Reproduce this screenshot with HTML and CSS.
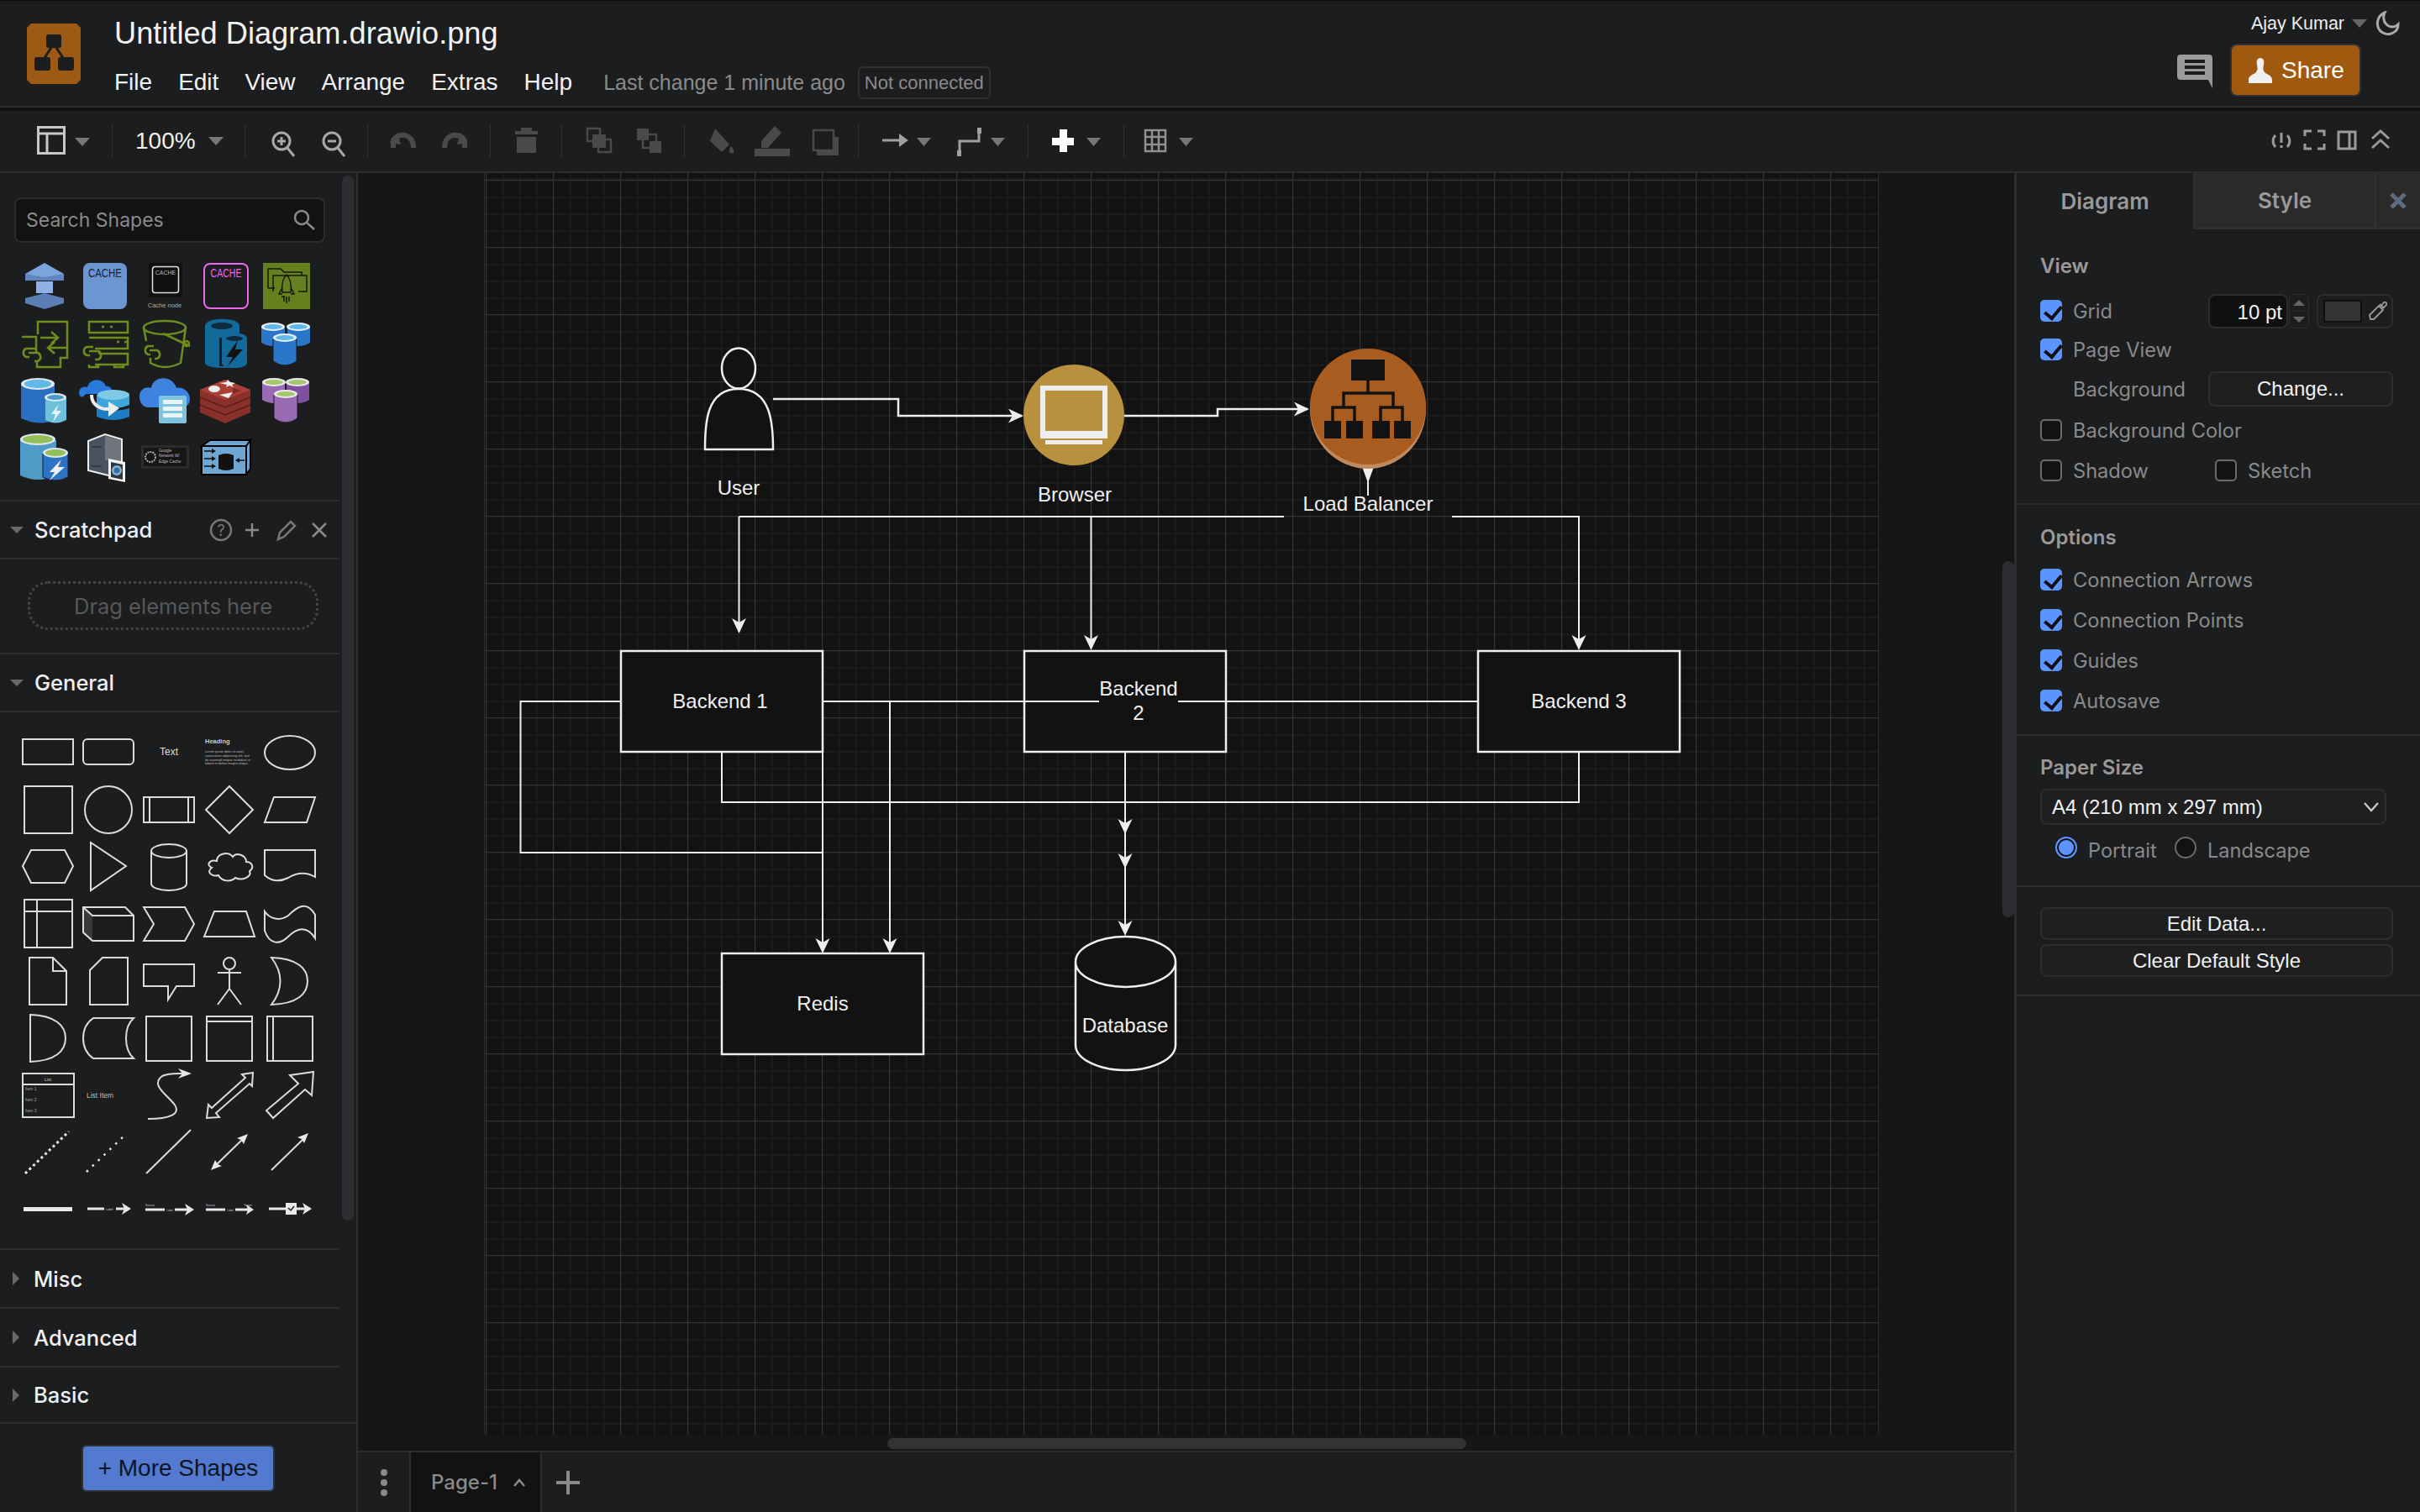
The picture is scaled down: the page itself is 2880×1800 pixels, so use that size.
FILE: index.html
```html
<!DOCTYPE html>
<html lang="en">
<head>
<meta charset="utf-8">
<title>Untitled Diagram.drawio.png</title>
<link rel="stylesheet" href="styles.css">
</head>
<body>
<header class="header">
  <svg class="logo" width="64" height="72" viewBox="0 0 64 72"><path class="logo-bg" d="M5 0H59L64 5V67L59 72H5L0 67V5Z"/><path class="logo-link" d="M32 24L19 44M32 24L45 44"/><rect class="logo-node" x="23" y="13" width="18" height="16" rx="3"/><rect class="logo-node" x="9" y="40" width="19" height="16" rx="3"/><rect class="logo-node" x="37" y="40" width="19" height="16" rx="3"/></svg>
  <div class="titleblock">
    <div class="title">Untitled Diagram.drawio.png</div>
    <nav class="menu">
      <span>File</span><span>Edit</span><span>View</span><span>Arrange</span><span>Extras</span><span>Help</span>
      <span class="lastchange">Last change 1 minute ago</span>
      <span class="status">Not connected</span>
    </nav>
  </div>
  <div class="account">
    <div class="userrow">
      <span class="username">Ajay Kumar</span>
      <svg width="18" height="10" viewBox="0 0 18 10"><path class="caret-dim" d="M0 0H18L9 10Z"/></svg>
      <svg width="30" height="30" viewBox="0 0 30 30"><path class="moon" d="M12 2C5 5 2 12 4 19C6 26 15 30 22 26C26 24 28 20 28 16C24 20 18 20 14 16C10 12 10 6 12 2Z"/></svg>
    </div>
    <div class="sharerow">
      <svg width="42" height="40" viewBox="0 0 42 40"><path class="comment" d="M4 0H38Q42 0 42 4V40L37 30H4Q0 30 0 26V4Q0 0 4 0Z"/><rect class="comment-line" x="9" y="6" width="24" height="4"/><rect class="comment-line" x="9" y="13" width="24" height="4"/><rect class="comment-line" x="9" y="20" width="24" height="4"/></svg>
      <button class="share"><svg width="30" height="30" viewBox="0 0 30 30"><path class="share-icon" d="M15 0C19 0 20 4 19 8C18 12 18 15 21 18C25 20 29 22 29 26V30H1V26C1 22 5 20 9 18C12 15 12 12 11 8C10 4 11 0 15 0Z"/></svg>Share</button>
    </div>
  </div>
</header>
<div class="toolbar">
  <svg width="133" height="72" viewBox="0 132 133 72"><rect class="ti" x="45.500" y="151.500" width="31" height="31"/><path class="ti" d="M46 159H76M56 159V182"/><path class="caret" d="M89 164H107L98 174Z"/></svg>
  <i class="sep"></i>
  <div class="zoomval"><span>100%</span><svg width="18" height="10" viewBox="0 0 18 10"><path class="caret" d="M0 0H18L9 10Z"/></svg></div>
  <i class="sep"></i>
  <svg width="145" height="72" viewBox="292 132 145 72"><circle class="ti2" cx="335" cy="168" r="10"/><path class="ti2" d="M342 176L350 186M330 168H340M335 163V173"/><circle class="ti2" cx="395" cy="168" r="10"/><path class="ti2" d="M402 176L410 186M390 168H400"/></svg>
  <i class="sep"></i>
  <svg width="145" height="72" viewBox="438 132 145 72"><path class="off-s" d="M468 176V167Q472 160 482 161Q492 164 492 176"/><path class="off" d="M464 170L473 158L477 172Z"/><path class="off-s" d="M553 176V167Q549 160 539 161Q529 164 529 176"/><path class="off" d="M557 170L548 158L544 172Z"/></svg>
  <i class="sep"></i>
  <svg width="84" height="72" viewBox="584 132 84 72"><path class="off" d="M620 152H633V156H640V160H613V156H620ZM615 163H638V182H615Z"/></svg>
  <i class="sep"></i>
  <svg width="145" height="72" viewBox="669 132 145 72"><rect class="off-t" x="699" y="153" width="15" height="15"/><rect class="off-t" x="712" y="166" width="15" height="15"/><rect class="off" x="705" y="160" width="16" height="16"/><rect class="off" x="758" y="153" width="14" height="14"/><rect class="off" x="773" y="168" width="14" height="14"/><rect class="off-t" x="765" y="160" width="16" height="16"/></svg>
  <i class="sep"></i>
  <svg width="206" height="72" viewBox="815 132 206 72"><path class="off" d="M851 153L868 172L859 181L845 168ZM870 174Q875 180 873 182Q870 184 868 181Q867 178 870 174Z"/><path class="off" d="M922 150L930 158L914 176H906V168ZM898 177H940V186H898Z"/><rect class="off-t" x="968" y="155" width="24" height="24"/><path class="off" d="M992 163H998V185H972V179H992Z"/></svg>
  <i class="sep"></i>
  <svg width="201" height="72" viewBox="1022 132 201 72"><path class="ti3" d="M1050 167H1072"/><path class="tf" d="M1081 167L1070 159V175Z"/><path class="caret" d="M1091 164H1108L1099.500 174Z"/><path class="ti3" d="M1142 181V168H1165V157"/><rect class="ti4" x="1139" y="179" width="5" height="7"/><rect class="ti4" x="1163" y="152" width="5" height="7"/><path class="caret" d="M1179 164H1196L1187.500 174Z"/></svg>
  <i class="sep"></i>
  <svg width="113" height="72" viewBox="1224 132 113 72"><path class="plus" d="M1261 154H1270V164H1278V173H1270V181H1261V173H1252V164H1261Z"/><path class="caret" d="M1293 164H1310L1301.500 174Z"/></svg>
  <i class="sep"></i>
  <svg width="92" height="72" viewBox="1338 132 92 72"><path class="ti5" d="M1363 155H1387V180H1363ZM1363 163H1387M1363 172H1387M1371 155V180M1379 155V180"/><path class="caret" d="M1403 164H1420L1411.500 174Z"/></svg>
  <svg class="tb-right" width="160" height="72" viewBox="2700 132 160 72"><path class="ts" d="M2708 161A10 10 0 0 0 2708 175M2722 161A10 10 0 0 1 2722 175M2715 158V170M2715 173V176"/><path class="ts" d="M2751 156H2743V162M2758 156H2766V162M2743 171V177H2751M2766 171V177H2758"/><path class="ts" d="M2783 157H2803V177H2783ZM2796 157V177"/><path class="ts" d="M2823 165L2833 156L2843 165M2823 176L2833 167L2843 176"/></svg>
</div>
<main class="main">
  <aside class="sidebar">
    <div class="sidebar-thumb"></div>
    <div class="search-sec">
      <div class="search"><span>Search Shapes</span><svg width="26" height="26" viewBox="0 0 26 26"><circle class="gi" cx="10" cy="10" r="8"/><path class="gi" d="M16 16L25 24"/></svg></div>
      <div class="icons">
        <svg viewBox="0 0 72 68"><path fill="#7ba4dd" d="M36 7L59 20V28H13V20Z"/><path fill="#5f86bf" d="M13 20L36 24L59 20V28H13Z"/><rect fill="#8fb3e6" x="26" y="29" width="20" height="14"/><path fill="#5b7fb5" d="M13 49L36 43L59 49V55L36 62L13 55Z"/></svg>
        <svg viewBox="0 0 72 68"><rect fill="#6c96d2" x="10" y="7" width="52" height="55" rx="8"/><text class="ic-t ic-dark" x="36" y="24" textLength="40" lengthAdjust="spacingAndGlyphs">CACHE</text></svg>
        <svg viewBox="0 0 72 68"><rect fill="#101010" x="16" y="7" width="40" height="41"/><rect class="ic-w" x="20.500" y="11.500" width="31" height="31" rx="3"/><text class="ic-s" x="36" y="21">CACHE</text><text class="ic-n" x="35" y="60">Cache node</text></svg>
        <svg viewBox="0 0 72 68"><rect class="ic-p" x="10" y="8" width="52" height="53" rx="7"/><text class="ic-t ic-pink" x="36" y="24" textLength="37" lengthAdjust="spacingAndGlyphs">CACHE</text></svg>
        <svg viewBox="0 0 72 68"><rect fill="#67801f" x="8" y="7" width="56" height="55"/><path class="ic-k" d="M14 37V14H29L33 18H54V22H60V41H50M14 37H22M20 41V22H54M34 47H30"/><path class="ic-k" d="M36 21C41 26 42 34 41 42H31C30 34 31 26 36 21ZM31 36L27 44H31M41 36L45 44H41M33 47V53M36 47V55M39 47V53"/></svg>

        <svg viewBox="0 0 72 68"><path class="ic-g" d="M28 24V9H63V52H55V63H27V55M9 27H26V47"/><path class="ic-g" d="M31 28H50M44 21L52 28L44 35M62 40H41M48 33L40 40L48 47"/><path class="ic-g" d="M25 41H14A5.500 5.500 0 0 0 14 51H18M17 46H28A5.500 5.500 0 0 1 28 56H24"/></svg>
        <svg viewBox="0 0 72 68"><path class="ic-g" d="M17 9H63V22H17ZM17 28H63V41H24M28 47H63V60H24M32 15H35M42 15H45M50 33H53M59 33H62M17 60V63H28V60M47 60V63H58V60"/><path class="ic-g" d="M22 39H14A5.500 5.500 0 0 0 14 49H18M17 44H28A5.500 5.500 0 0 1 28 54H24"/></svg>
        <svg viewBox="0 0 72 68"><ellipse class="ic-g" cx="35" cy="16" rx="25" ry="8"/><path class="ic-g" d="M10 16L13 32M60 16L54 58Q35 68 18 58V52M33 23L48 30L65 38"/><circle class="ic-g" cx="61" cy="35" r="3"/><path class="ic-g" d="M22 38H15A5.500 5.500 0 0 0 15 48H18M17 43H26A5.500 5.500 0 0 1 26 53H23"/></svg>
        <svg viewBox="0 0 72 68"><path fill="#13699a" d="M11 14V58C11 66 52 66 52 58V14C52 3 11 3 11 14Z"/><ellipse fill="#0e2b3d" cx="31" cy="14" rx="13" ry="4"/><path fill="#1c1d1f" d="M28 28H64V62H28Z"/><path fill="#13699a" d="M31 29V58C31 66 61 66 61 58V29C61 20 31 20 31 29Z"/><ellipse fill="#0e2b3d" cx="46" cy="29" rx="10" ry="3"/><path fill="#111" d="M50 31L36 51H44L38 62L56 42H47Z"/></svg>
        <svg viewBox="0 0 72 68"><path fill="#2a77c9" d="M6 16V34Q20 42 34 34V16Z"/><ellipse fill="#e8eef5" cx="20" cy="15" rx="14" ry="5"/><ellipse fill="#5fb8e6" cx="20" cy="15" rx="11" ry="3"/><path fill="#2a77c9" d="M37 16V34Q51 42 64 34V16Z"/><ellipse fill="#e8eef5" cx="50" cy="15" rx="14" ry="5"/><ellipse fill="#5fb8e6" cx="50" cy="15" rx="11" ry="3"/><path fill="#2a77c9" stroke="#1c1d1f" d="M20 30V56Q34 66 48 56V30Z"/><ellipse fill="#e8eef5" cx="34" cy="28" rx="14" ry="5"/><ellipse fill="#5fb8e6" cx="34" cy="28" rx="11" ry="3"/></svg>

        <svg viewBox="0 0 72 68"><path fill="#2a6fc0" d="M8 16V56Q30 66 48 58V16Z"/><ellipse fill="#dfe8ef" cx="28" cy="15" rx="20" ry="7"/><ellipse fill="#5fb8e6" cx="28" cy="15" rx="16" ry="5"/><path fill="#6fc0dc" d="M37 32V58Q49 65 62 58V32Z"/><ellipse fill="#dfe8ef" cx="49" cy="31" rx="13" ry="5"/><ellipse fill="#4a9cc8" cx="49" cy="31" rx="10" ry="3"/><path fill="#e4f2f8" d="M53 39L44 51H49L46 60L56 47H50Z"/></svg>
        <svg viewBox="0 0 72 68"><path fill="#2a7ade" d="M5 26C5 18 13 18 15 19C18 7 34 8 37 18C42 17 46 22 44 27H13C9 33 5 30 5 26Z"/><path fill="#3fa6dc" d="M26 28H65V40Q46 48 26 40Z"/><path fill="#1c7cc4" d="M26 44Q46 50 65 44V54Q46 62 26 54Z"/><ellipse fill="#7ecbe8" cx="46" cy="28" rx="19" ry="6"/><path fill="none" stroke="#eee" stroke-width="4" d="M20 28C20 40 30 46 42 45"/><path fill="#eee" d="M53 44L40 36V54Z"/></svg>
        <svg viewBox="0 0 72 68"><path fill="#3e83e0" d="M5 30C5 20 15 18 19 20C21 5 44 4 49 20C56 18 65 24 65 33C65 40 60 43 54 43H16C9 43 5 37 5 30Z"/><rect fill="#7fc4de" x="28" y="29" width="33" height="33" rx="2"/><rect fill="#e8f4f8" x="33" y="34" width="23" height="5"/><rect fill="#e8f4f8" x="33" y="42" width="23" height="5"/><rect fill="#e8f4f8" x="33" y="50" width="23" height="5"/></svg>
        <svg viewBox="0 0 72 68"><path fill="#8a302a" d="M5 22L35 10L65 22V49L35 62L5 49Z"/><path fill="none" stroke="#5a1d19" stroke-width="1.500" d="M5 31L35 43L65 31M5 40L35 52L65 40"/><path fill="#a93f37" d="M5 22L35 10L65 22L35 34Z"/><ellipse fill="#eee" cx="22" cy="21" rx="7" ry="4"/><path fill="#eee" d="M28 14L36 13L38 10L41 13L47 14L43 16L45 19L40 17L36 19L37 16Z"/><path fill="#eee" d="M28 28L44 25L39 32Z"/><path fill="#7c2a24" d="M44 20L54 23L44 27Z"/></svg>
        <svg viewBox="0 0 72 68"><path fill="#9a6bb5" d="M7 14V34Q21 42 34 34V14Z"/><ellipse fill="#ece6f0" cx="21" cy="13" rx="14" ry="5"/><ellipse fill="#a4c86a" cx="21" cy="13" rx="11" ry="3"/><path fill="#7f4fa0" d="M36 14V34Q50 42 63 34V14Z"/><ellipse fill="#ece6f0" cx="49" cy="13" rx="14" ry="5"/><ellipse fill="#a4c86a" cx="49" cy="13" rx="11" ry="3"/><path fill="#9a6bb5" stroke="#1c1d1f" d="M21 28V56Q35 66 49 56V28Z"/><ellipse fill="#ece6f0" cx="35" cy="27" rx="14" ry="5"/><ellipse fill="#a4c86a" cx="35" cy="27" rx="11" ry="3"/></svg>

        <svg viewBox="0 0 72 68"><path fill="#4f9bc8" d="M7 14V56Q28 66 50 56V14Z"/><ellipse fill="#dfe8ef" cx="28" cy="13" rx="21" ry="7"/><ellipse fill="#93bf5a" cx="28" cy="13" rx="18" ry="5"/><path fill="#2d73c4" stroke="#1c1d1f" d="M34 30V58Q49 66 64 58V30Z"/><ellipse fill="#dfe8ef" cx="49" cy="29" rx="15" ry="6"/><ellipse fill="#93bf5a" cx="49" cy="29" rx="12" ry="4"/><path fill="#eef" d="M56 37L42 52H48L42 62L60 46H52Z"/></svg>
        <svg viewBox="0 0 72 68"><path fill="#4a5260" stroke="#eee" stroke-width="2" d="M16 15L36 7L56 13V55L40 56L16 50Z"/><path fill="#71767d" d="M36 9L55 14V40L36 38Z"/><path stroke="#222" d="M20 22H32M20 45H32"/><path fill="#f4f4f4" d="M40 36L60 40V64L40 60Z"/><path fill="#30363e" d="M43 40L57 43V61L43 58Z"/><circle fill="#8fb0c8" cx="50" cy="50" r="6"/><circle fill="#2d6fa8" cx="50" cy="50" r="3.500"/></svg>
        <svg viewBox="0 0 72 68"><rect fill="#2b2c2e" x="7" y="20" width="57" height="28" rx="2"/><rect fill="#161616" x="10" y="23" width="51" height="22"/><circle class="ic-ring" cx="18" cy="34" r="6"/><text class="ic-g-t" x="28" y="28">Google</text><text class="ic-g-t" x="28" y="34">Network W/</text><text class="ic-g-t" x="28" y="41">Edge Cache</text></svg>
        <svg viewBox="0 0 72 68"><path fill="#6fa7d4" stroke="#000" stroke-width="2" d="M7 21H60V55H7Z"/><path fill="#6fa7d4" stroke="#000" stroke-width="2" d="M7 21L17 14H65L60 21ZM60 21L65 14V48L60 55Z"/><path fill="#111" d="M27 32Q36 28 45 32V48Q36 52 27 48Z"/><path class="ic-a" d="M10 27H22M10 36H22M10 45H22M48 38H58"/><path fill="#111" d="M24 27L19 24V30ZM24 36L19 33V39ZM24 45L19 42V48ZM47 38L52 35V41Z"/></svg>
      </div>
    </div>
    <div class="sec-head"><i class="tri-down"></i><span>Scratchpad</span>
      <svg class="scratch-tools" width="148" height="30" viewBox="0 0 148 30"><circle class="gi2" cx="22" cy="15" r="12"/><text class="help" x="22" y="22">?</text><path class="gi" d="M51 15H67M59 7V23"/><path class="gi2" d="M90 26L92 18L105 5L110 10L97 23Z"/><path class="gi" d="M132 7L148 23M148 7L132 23" transform="translate(-1 0)"/></svg>
    </div>
    <div class="scratch"><div class="drop">Drag elements here</div></div>
    <div class="sec-head"><i class="tri-down"></i><span>General</span></div>
    <div class="general">
      <svg viewBox="0 0 72 68"><rect class="s" x="6" y="19" width="60" height="30"/></svg>
      <svg viewBox="0 0 72 68"><rect class="s" x="6" y="19" width="60" height="30" rx="5"/></svg>
      <svg viewBox="0 0 72 68"><text class="sh-text" x="36" y="38">Text</text></svg>
      <svg viewBox="0 0 72 68"><text class="sh-head" x="7" y="24">Heading</text><text class="sh-lorem" x="7" y="35">Lorem ipsum dolor sit amet,</text><text class="sh-lorem" x="7" y="40">consectetur adipisicing elit, sed</text><text class="sh-lorem" x="7" y="45">do eiusmod tempor incididunt ut</text><text class="sh-lorem" x="7" y="49">labore et dolore magna aliqua.</text></svg>
      <svg viewBox="0 0 72 68"><ellipse class="s" cx="36" cy="35" rx="30" ry="20"/></svg>

      <svg viewBox="0 0 72 68"><rect class="s" x="8" y="7" width="57" height="56"/></svg>
      <svg viewBox="0 0 72 68"><ellipse class="s" cx="36" cy="35" rx="28" ry="28"/></svg>
      <svg viewBox="0 0 72 68"><path class="s" d="M6 20H66V50H6ZM13 20V50M59 20V50"/></svg>
      <svg viewBox="0 0 72 68"><path class="s" d="M36 7L64 35L36 63L8 35Z"/></svg>
      <svg viewBox="0 0 72 68"><path class="s" d="M6 50L17 20H66L56 50Z"/></svg>

      <svg viewBox="0 0 72 68"><path class="s" d="M6 34L16 15H56L66 34L56 54H16Z"/></svg>
      <svg viewBox="0 0 72 68"><path class="s" d="M15 6L57 34L15 63Z"/></svg>
      <svg viewBox="0 0 72 68"><path class="s" d="M15 16V55A21 8 0 0 0 57 55V16A21 8 0 0 0 15 16A21 8 0 0 0 57 16"/></svg>
      <svg viewBox="0 0 72 68"><path class="s" d="M21 28C12 26 8 33 15 36C8 41 15 47 23 45C27 53 38 53 43 48C51 52 63 47 60 40C66 36 63 29 56 29C56 21 44 17 40 23C35 16 21 19 21 28Z"/></svg>
      <svg viewBox="0 0 72 68"><path class="s" d="M6 15H66V47C54 40 44 42 34 48C24 53 14 52 6 45Z"/></svg>

      <svg viewBox="0 0 72 68"><path class="s" d="M8 6H65V63H8ZM8 20H65M23 6V63"/></svg>
      <svg viewBox="0 0 72 68"><path class="sd" d="M6 15L17 25V55L6 45Z"/><path class="s" d="M6 15H56L66 25V55H17L6 45ZM6 15L17 25H66"/></svg>
      <svg viewBox="0 0 72 68"><path class="s" d="M6 15H55L66 35L55 55H6L18 35Z"/></svg>
      <svg viewBox="0 0 72 68"><path class="s" d="M6 50L18 20H56L66 50Z"/></svg>
      <svg viewBox="0 0 72 68"><path class="s" d="M6 20C12 29 24 32 34 25C44 15 56 6 66 24V52C56 36 44 40 34 50C24 60 12 60 6 43Z"/></svg>

      <svg viewBox="0 0 72 68"><path class="s" d="M14 7H42L58 23V63H14ZM42 7V23H58"/></svg>
      <svg viewBox="0 0 72 68"><path class="s" d="M29 7H59V63H14V22Z"/></svg>
      <svg viewBox="0 0 72 68"><path class="s" d="M6 15H66V41H45L35 57V41H6Z"/></svg>
      <svg viewBox="0 0 72 68"><circle class="s" cx="36" cy="14" r="7"/><path class="s" d="M22 25H50M36 21V44L22 63M36 44L50 63"/></svg>
      <svg viewBox="0 0 72 68"><path class="s" d="M14 7C45 8 57 20 57 35C57 50 45 62 14 63C28 45 28 25 14 7Z"/></svg>

      <svg viewBox="0 0 72 68"><path class="s" d="M15 7C45 8 57 20 57 35C57 50 45 62 15 63Z"/></svg>
      <svg viewBox="0 0 72 68"><path class="s" d="M18 11H66C54 22 54 48 66 59H18C2 48 2 22 18 11Z"/></svg>
      <svg viewBox="0 0 72 68"><rect class="s" x="9" y="9" width="54" height="53"/></svg>
      <svg viewBox="0 0 72 68"><path class="s" d="M9 9H63V62H9ZM9 15H63"/></svg>
      <svg viewBox="0 0 72 68"><path class="s" d="M9 9H63V62H9ZM16 9V62"/></svg>

      <svg viewBox="0 0 72 68"><path class="s" d="M6 9H67V61H6ZM6 22H67"/><text class="sh-list" x="36" y="18">List</text><text class="sh-item" x="9" y="29">Item 1</text><text class="sh-item" x="9" y="42">Item 2</text><text class="sh-item" x="9" y="55">Item 3</text></svg>
      <svg viewBox="0 0 72 68"><text class="sh-li" x="10" y="38">List Item</text></svg>
      <svg viewBox="0 0 72 68"><path class="s" d="M11 63C35 63 52 58 42 45C32 33 14 22 28 12C36 8 46 9 55 9"/><path class="sf" d="M63 9L47 3L52 9L47 15Z"/></svg>
      <svg viewBox="0 0 72 68"><path class="s" d="M64 8L51 10L55 14L15 50L11 46L9 62L24 61L20 56L60 21L63 24Z"/></svg>
      <svg viewBox="0 0 72 68"><path class="s" d="M64 7L36 11L46 21L8 53L16 62L54 28L62 35Z"/></svg>

      <svg viewBox="0 0 72 68"><path class="dot" d="M9 60L61 10"/></svg>
      <svg viewBox="0 0 72 68"><path class="dot2" d="M10 58L58 12"/></svg>
      <svg viewBox="0 0 72 68"><path class="s" d="M9 60L62 8"/></svg>
      <svg viewBox="0 0 72 68"><path class="s" d="M17 53L54 17"/><path class="sf" d="M58 13L53 25L50 20L45 18ZM14 56L19 44L22 49L27 51Z"/></svg>
      <svg viewBox="0 0 72 68"><path class="s" d="M14 56L54 17"/><path class="sf" d="M58 12L53 24L50 19L45 17Z"/></svg>

      <svg viewBox="0 0 72 68"><rect class="sf" x="7" y="32" width="58" height="5"/></svg>
      <svg viewBox="0 0 72 68"><path class="s3" d="M11 34H31M45 34H60"/><text class="sh-lab" x="33" y="36">Label</text><path class="sf" d="M63 34L52 27L55 34L52 41Z"/></svg>
      <svg viewBox="0 0 72 68"><path class="s3" d="M8 35H31M43 35H63"/><text class="sh-lab" x="8" y="31">Source</text><text class="sh-lab2" x="37" y="37">Label</text><path class="sf" d="M66 35L55 28L58 35L55 42Z"/></svg>
      <svg viewBox="0 0 72 68"><path class="s3" d="M8 35H31M43 35H62"/><text class="sh-lab" x="8" y="31">Source</text><text class="sh-lab2" x="37" y="37">Label</text><text class="sh-lab" x="53" y="31">Target</text><path class="sf" d="M65 35L56 29L58 35L56 41Z"/></svg>
      <svg viewBox="0 0 72 68"><path class="s3" d="M11 34H60"/><rect class="sf" x="31" y="27" width="13" height="14"/><path class="chk" d="M34 33L37 36L41 31"/><path class="sf" d="M62 34L51 27L54 34L51 41Z"/></svg>
    </div>
    <div class="collapsed"><i class="tri-right"></i><span>Misc</span></div>
    <div class="collapsed"><i class="tri-right"></i><span>Advanced</span></div>
    <div class="collapsed short"><i class="tri-right"></i><span>Basic</span></div>
    <div class="more-wrap"><button class="more">+ More Shapes</button></div>
  </aside>

  <section class="workspace">
    <div class="canvas">
      <div class="page">
        <svg class="diagram" width="1658" height="1502" viewBox="577 206 1658 1502">
          <defs><marker id="head" markerWidth="20" markerHeight="18" refX="16" refY="8.500" orient="auto" markerUnits="userSpaceOnUse"><path class="arrow" d="M0 0L18 8.500L0 17L5 8.500Z"/></marker></defs>
          <g class="box"><ellipse cx="879" cy="438.500" rx="20" ry="24"/><path d="M839 535C839 505 840 463 879 463C918 463 920 505 920 535Z"/></g>
          <text class="lbl" x="879" y="589">User</text>

          <path class="edge thick" marker-end="url(#head)" d="M920 475H1069V495H1216"/>
          <ellipse class="browser" cx="1278" cy="494" rx="60" ry="60"/>
          <path class="mono" d="M1238 459H1318V522H1238ZM1244 465V513H1312V465ZM1244 524H1312V529H1244Z" fill-rule="evenodd"/>
          <text class="lbl" x="1279" y="597">Browser</text>

          <path class="edge thick" marker-end="url(#head)" d="M1338 495H1449V487H1556"/>
          <path class="edge" d="M1628 590V560"/><path class="arrow" d="M1628 575L1620 553L1628 558L1636 553Z"/>
          <ellipse class="lb-shade" cx="1628" cy="487" rx="69" ry="71"/>
          <ellipse class="lb" cx="1628" cy="484" rx="69" ry="69"/>
          <g class="lb-icon"><rect x="1608" y="428" width="40" height="25"/><rect x="1576" y="501" width="20" height="21"/><rect x="1602" y="501" width="20" height="21"/><rect x="1633" y="501" width="21" height="21"/><rect x="1659" y="501" width="20" height="21"/></g>
          <path class="lb-link" d="M1628 453V468M1599 484V468H1658V484M1586 501V485H1612V501M1643 501V485H1669V501"/>

          <text class="lbl" x="1628" y="608">Load Balancer</text>
          <path class="edge" d="M1528 615H879.500"/>
          <path class="edge" marker-end="url(#head)" d="M879.500 615V752"/>
          <path class="edge" marker-end="url(#head)" d="M1298.500 615V772"/>
          <path class="edge" marker-end="url(#head)" d="M1728 615H1879V772"/>

          <path class="edge" d="M739 835H619.500V1015H979"/>
          <path class="edge" d="M979 835H1308M1402 835H1759"/>
          <path class="edge" d="M859 895V955H1879V895"/>
          <path class="edge" marker-end="url(#head)" d="M979 895V1133"/>
          <path class="edge" marker-end="url(#head)" d="M1059 835V1133"/>
          <path class="edge" marker-end="url(#head)" d="M1339 895V955L1339 991"/>
          <path class="edge" marker-end="url(#head)" d="M1339 991V1032"/>
          <path class="edge" marker-end="url(#head)" d="M1339 1032V1112"/>

          <rect class="box" x="739" y="775" width="240" height="120"/><text class="lbl" x="857" y="843">Backend 1</text>
          <path class="box-open" d="M1219 835V775H1459V895H1219V835"/><path class="edge" d="M1219 835H1308M1402 835H1459"/>
          <text class="lbl" x="1355" y="828">Backend</text><text class="lbl" x="1355" y="857">2</text>
          <rect class="box" x="1759" y="775" width="240" height="120"/><text class="lbl" x="1879" y="843">Backend 3</text>
          <rect class="box" x="859" y="1135" width="240" height="120"/><text class="lbl" x="979" y="1203">Redis</text>
          <g class="box"><path d="M1280 1145V1244A59.500 30 0 0 0 1399 1244V1145A59.500 30 0 0 0 1280 1145A59.500 30 0 0 0 1399 1145"/></g>
          <text class="lbl" x="1339" y="1229">Database</text>
        </svg>
      </div>
      <div class="vthumb"></div>
      <div class="hthumb"></div>
    </div>
    <div class="tabbar">
      <div class="tab-more"><svg width="14" height="34" viewBox="0 0 14 34"><circle class="dots" cx="7" cy="5" r="4"/><circle class="dots" cx="7" cy="17" r="4"/><circle class="dots" cx="7" cy="29" r="4"/></svg></div>
      <div class="tab"><span>Page-1</span><svg width="14" height="10" viewBox="0 0 14 10"><path class="chev" d="M1 9L7 2L13 9"/></svg></div>
      <svg class="tab-add" width="28" height="28" viewBox="0 0 28 28"><path class="add" d="M14 0V28M0 14H28"/></svg>
    </div>
  </section>

  <aside class="panel">
    <div class="tabs"><div class="ptab on">Diagram</div><div class="ptab">Style</div><div class="ptab close"><svg width="20" height="20" viewBox="0 0 20 20"><path class="x" d="M2 2L18 18M18 2L2 18"/></svg></div></div>
    <div class="psec view">
      <h3>View</h3>
      <div class="row h46"><i class="cb on"></i><label>Grid</label>
        <div class="ctrls"><div class="num">10 pt</div><div class="spin"><svg width="24" height="41" viewBox="0 0 24 41"><path class="sp" d="M5 14L12 7L19 14ZM5 27L12 34L19 27Z"/><path class="sp-l" d="M1 20H23"/></svg></div>
          <div class="swatch"><i></i><svg width="22" height="24" viewBox="0 0 22 24"><path class="pip" d="M2 22L1 17L12 6L17 11L6 22ZM13 4L18 9M15 6L18 2Q20 1 21 3Q22 5 20 6L17 9"/></svg></div></div></div>
      <div class="row h46"><i class="cb on"></i><label>Page View</label></div>
      <div class="row h48"><i class="cb none"></i><label>Background</label><button class="pbtn change">Change...</button></div>
      <div class="row h50"><i class="cb"></i><label>Background Color</label></div>
      <div class="row h46"><i class="cb"></i><label class="w1">Shadow</label><i class="cb"></i><label>Sketch</label></div>
    </div>
    <div class="psec options">
      <h3>Options</h3>
      <div class="row"><i class="cb on"></i><label>Connection Arrows</label></div>
      <div class="row"><i class="cb on"></i><label>Connection Points</label></div>
      <div class="row"><i class="cb on"></i><label>Guides</label></div>
      <div class="row"><i class="cb on"></i><label>Autosave</label></div>
    </div>
    <div class="psec paper">
      <h3>Paper Size</h3>
      <div class="select"><span>A4 (210 mm x 297 mm)</span><svg width="18" height="12" viewBox="0 0 18 12"><path class="sel-chev" d="M1 1L9 10L17 1"/></svg></div>
      <div class="radios"><i class="radio on"></i><label class="w2">Portrait</label><i class="radio"></i><label>Landscape</label></div>
    </div>
    <div class="psec actions"><button class="pbtn">Edit Data...</button><button class="pbtn">Clear Default Style</button></div>
  </aside>
</main>
</body>
</html>
```

FILE: styles.css
```css
*{box-sizing:border-box}
html,body{margin:0;padding:0;width:2880px;height:1800px;overflow:hidden;background:#1c1d1f;font-family:Inter,"Noto Sans",sans-serif;color:#f0f0f0}
i{font-style:normal;display:block}
button{font-family:inherit}
svg{display:block;flex:none}

.header{height:132px;display:flex;padding-left:32px;border-top:1px solid #0c0c0c;border-bottom:4px solid #111;box-shadow:inset 0 -2px 0 #303133;font-family:"Liberation Sans",Arial,sans-serif}
.logo{margin-top:27px}
.logo-bg{fill:#9c5a14}
.logo-node{fill:#1c1d1f}
.logo-link{stroke:#1c1d1f;stroke-width:3;fill:none}
.titleblock{margin-left:40px;padding-top:15px}
.title{font-size:36.200px;line-height:48px;color:#f2f2f2}
.menu{display:flex;align-items:center;gap:31px;margin-top:15px;height:38px;font-size:28px;color:#f2f2f2}
.lastchange{font-size:25px;color:#8a8a8a;margin-left:6px}
.status{margin-left:-16px;height:39px;line-height:35px;padding:0 6px;border:2px solid #303134;border-radius:6px;font-size:22px;color:#8a8a8a}
.account{margin-left:auto;display:flex;flex-direction:column;align-items:flex-end;padding-right:24px}
.userrow{display:flex;align-items:center;gap:9px;margin-top:12px;height:30px}
.username{font-size:21.500px;color:#eee}
.caret-dim{fill:#666}
.moon{fill:none;stroke:#aaa;stroke-width:3}
.sharerow{display:flex;align-items:flex-start;gap:21px;margin:9px 46px 0 0}
.sharerow>svg{margin-top:13px}
.comment{fill:#9a9a9a}
.comment-line{fill:#1c1d1f}
.share{height:63px;width:156px;display:flex;align-items:center;gap:10px;padding:0 0 0 19px;background:#a05a10;border:2px solid #303134;border-radius:8px;color:#fff;font-size:28px;font-family:"Liberation Sans",Arial,sans-serif}
.share-icon{fill:#f0f0f0}

.toolbar{height:74px;display:flex;align-items:flex-start;border-bottom:2px solid #2c2d30}
.sep{width:1px;height:39px;margin-top:16px;background:#303134}
.zoomval{width:157px;height:72px;display:flex;align-items:center;padding-left:27px;font-family:"Liberation Sans",Arial,sans-serif;font-size:28px;color:#f0f0f0;gap:15px}
.tb-right{margin-left:auto;margin-right:20px}
.caret{fill:#777}
.ti{fill:none;stroke:#c8c8c8;stroke-width:3}
.ti2{fill:none;stroke:#a8a8a8;stroke-width:3}
.ti3{fill:none;stroke:#a0a0a0;stroke-width:3}
.ti4{fill:#a0a0a0}
.ti5{fill:none;stroke:#909090;stroke-width:2.500}
.tf{fill:#a0a0a0}
.plus{fill:#fff}
.off{fill:#4a4a4a}
.off-s{fill:none;stroke:#4a4a4a;stroke-width:6}
.off-t{fill:none;stroke:#4a4a4a;stroke-width:2.500}
.ts{fill:none;stroke:#9a9a9a;stroke-width:3}

.main{height:1594px;display:flex}
.sidebar{width:426px;flex:none;position:relative;border-right:2px solid #2c2d30}
.sidebar-thumb{position:absolute;left:407px;top:3px;width:14px;height:1244px;border-radius:7px;background:#2d2e31}
.search-sec{width:404px;padding:29px 17px 17px;border-bottom:2px solid #2c2d30}
.search{width:370px;height:54px;display:flex;align-items:center;justify-content:space-between;padding:0 10px 0 12px;background:#121212;border:2px solid #2c2d30;border-radius:8px;font-size:23px;color:#8a8a8a}
.icons{display:grid;grid-template-columns:repeat(5,72px);grid-auto-rows:68px;margin-top:17px}
.icons svg,.general svg{width:72px;height:68px;overflow:visible}
.ic-t{font:15px "Liberation Sans",sans-serif;text-anchor:middle}
.ic-dark{fill:#16212e}
.ic-pink{fill:#ee66ee}
.ic-w{fill:none;stroke:#ddd;stroke-width:1.500}
.ic-p{fill:none;stroke:#ee66ee;stroke-width:2}
.ic-s{font:7px "Liberation Sans",sans-serif;fill:#bbb;text-anchor:middle}
.ic-n{font:7.500px "Liberation Sans",sans-serif;fill:#aaa;text-anchor:middle}
.ic-k{fill:none;stroke:#14180a;stroke-width:1.500}
.ic-g{fill:none;stroke:#6d8e1c;stroke-width:2.500}
.ic-ring{fill:none;stroke:#aaa;stroke-width:2;stroke-dasharray:2 1}
.ic-g-t{font:4.800px "Liberation Sans",sans-serif;fill:#bbb}
.ic-a{stroke:#111;stroke-width:1.500}

.sec-head{width:404px;height:69px;display:flex;align-items:center;padding-left:12px;border-bottom:2px solid #2c2d30;font-size:25.500px;font-weight:500;color:#f0f0f0}
.sec-head span{margin-left:13px}
.tri-down{width:0;height:0;border-style:solid;border-width:8px 8px 0;border-color:#6a6a6a transparent transparent}
.scratch-tools{margin-left:auto;margin-right:15px}
.gi{fill:none;stroke:#8a8a8a;stroke-width:2.500}
.gi2{fill:none;stroke:#777;stroke-width:2.500}
.help{font:18px Inter,sans-serif;fill:#777;text-anchor:middle}
.scratch{width:404px;height:113px;padding:26px 0 0 33px;border-bottom:2px solid #2c2d30}
.drop{width:346px;height:58px;display:flex;align-items:center;justify-content:center;border:3px dotted #444;border-radius:24px;font-size:25.500px;color:#585858}
.general{width:404px;height:640px;display:grid;grid-template-columns:repeat(5,72px);grid-auto-rows:68px;padding:13px 0 0 21px;border-bottom:2px solid #2c2d30}
.general svg{fill:none}
.s{fill:none;stroke:#dcdcdc;stroke-width:2}
.sd{fill:#3a3a3a}
.sf{fill:#e8e8e8}
.s3{fill:none;stroke:#e8e8e8;stroke-width:3}
.chk{fill:none;stroke:#222;stroke-width:1.500}
.dot{fill:none;stroke:#e8e8e8;stroke-width:3;stroke-dasharray:3 3.500}
.dot2{fill:none;stroke:#e8e8e8;stroke-width:2.500;stroke-dasharray:2.500 7}
.sh-text{font:12px "Liberation Sans",sans-serif;fill:#ddd;text-anchor:middle}
.sh-head{font:bold 7.500px "Liberation Sans",sans-serif;fill:#ccc}
.sh-lorem{font:3.800px "Liberation Sans",sans-serif;fill:#bbb}
.sh-list{font:5px "Liberation Sans",sans-serif;fill:#ccc;text-anchor:middle}
.sh-item{font:4.800px "Liberation Sans",sans-serif;fill:#aaa}
.sh-li{font:8.500px "Liberation Sans",sans-serif;fill:#bbb}
.sh-lab{font:3.500px "Liberation Sans",sans-serif;fill:#ccc}
.sh-lab2{font:3px "Liberation Sans",sans-serif;fill:#ccc;text-anchor:middle}

.collapsed{width:404px;height:70px;display:flex;align-items:center;padding-left:15px;border-bottom:2px solid #2c2d30;font-size:25.500px;font-weight:500;color:#f0f0f0}
.collapsed span{margin-left:17px}
.short{height:67px;width:100%}
.tri-right{width:0;height:0;border-style:solid;border-width:8px 0 8px 8px;border-color:transparent transparent transparent #6a6a6a}
.more-wrap{padding:25px 0 0 97px}
.more{width:230px;height:56px;padding:0;border:2px solid #303134;border-radius:6px;background:#5379d0;font-family:"Liberation Sans",Arial,sans-serif;font-size:28px;color:#0e1420}

.workspace{width:1971px;flex:none;display:flex;flex-direction:column}
.canvas{height:1521px;position:relative;overflow:hidden;background:#161616;padding-left:150px}
.page{width:1660px;height:1502px;border:solid #2c2c2c;border-width:0 1px;background-color:#121212;
  background-image:
  repeating-linear-gradient(90deg,#333 0 1px,transparent 1px 80px),
  repeating-linear-gradient(180deg,#333 0 1px,transparent 1px 80px),
  repeating-linear-gradient(90deg,#1b1b1b 0 2px,transparent 2px 20px),
  repeating-linear-gradient(180deg,#1b1b1b 0 2px,transparent 2px 20px);
  background-position:1px 8px}
.box,.box ellipse,.box path{fill:#121212;stroke:#eee;stroke-width:2.500}
.box-open{fill:#121212;stroke:#eee;stroke-width:2.500}
.edge{fill:none;stroke:#eee;stroke-width:2}
.thick{stroke-width:2.500}
.arrow{fill:#eee}
.lbl{font:24px "Liberation Sans",Arial,sans-serif;fill:#f0f0f0;text-anchor:middle}
.browser{fill:#b8903e}
.mono{fill:#eee}
.lb{fill:#a85c20}
.lb-shade{fill:#c08a60}
.lb-icon{fill:#131313}
.lb-link{fill:none;stroke:#131313;stroke-width:3.500}
.vthumb{position:absolute;left:1957px;top:462px;width:14px;height:424px;border-radius:7px;background:#2d2e31}
.hthumb{position:absolute;left:630px;top:1506px;width:689px;height:13px;border-radius:7px;background:#333}

.tabbar{height:73px;display:flex;align-items:stretch;border-top:2px solid #2c2d30}
.tab-more{width:61px;display:flex;align-items:center;justify-content:center}
.dots{fill:#8a8a8a}
.tab{width:158px;display:flex;align-items:center;gap:19px;padding-left:24px;background:#121212;border:solid #2c2d30;border-width:0 2px;font-size:24px;font-weight:500;color:#8a8a8a}
.chev{fill:none;stroke:#8a8a8a;stroke-width:2.500}
.tab-add{align-self:center;margin-left:17px}
.add{fill:none;stroke:#8a8a8a;stroke-width:4}

.panel{width:483px;flex:none;border-left:3px solid #2c2d30}
.tabs{height:67px;display:flex}
.ptab{width:214px;display:flex;align-items:center;justify-content:center;background:#2a2a2a;border-bottom:2px solid #303134;font-size:26px;font-weight:600;color:#999}
.ptab.on{width:212px;background:#1c1d1f;border-bottom:0;border-right:2px solid #303134}
.close{width:54px;border-left:2px solid #303134}
.x{stroke:#5c6b80;stroke-width:5}
.psec{padding-left:28px;padding-right:32px;border-bottom:2px solid #2c2d30}
.psec h3{margin:0;height:36px;line-height:36px;font-size:24px;font-weight:600;color:#999}
.view{height:328px;padding-top:26px}
.view h3{margin-bottom:12px}
.options{height:275px;padding-top:21px}
.options h3{margin-bottom:8px}
.paper{height:180px;padding-top:20px}
.actions{height:130px;padding-top:24px;display:flex;flex-direction:column;gap:5px}
.row{height:48px;display:flex;align-items:center;font-size:23.600px;color:#8a8a8a}
.h46{height:46px}.h48{height:48px}.h50{height:50px}
.row label{margin-left:13px}
.row label.w1{width:156px}
.row .cb+label.w1+.cb{margin-left:13px}
.cb{width:26px;height:26px;flex:none;position:relative;background:#121212;border:2px solid #6a6a6a;border-radius:5px}
.cb.none{visibility:hidden}
.cb.on{background:#5b94ff;border-color:#5b94ff}
.cb.on::after{content:"";position:absolute;left:7px;top:1px;width:9px;height:16px;border:solid #101010;border-width:0 4px 4px 0;transform:rotate(40deg)}
.ctrls{margin-left:auto;display:flex;align-items:center;width:220px}
.num{width:95px;height:41px;line-height:39px;padding-right:5px;text-align:right;background:#101010;border:2px solid #2c2d30;border-radius:8px;font-family:"Liberation Sans",Arial,sans-serif;font-size:24px;color:#f0f0f0}
.spin{margin-left:1px;width:24px;height:41px;border:1px solid #2c2d30;border-radius:6px}
.spin svg{margin:-1px}
.sp{fill:#666}
.sp-l{stroke:#303134;stroke-width:1}
.swatch{margin-left:9px;width:91px;height:41px;display:flex;align-items:center;padding-left:6px;gap:8px;border:2px solid #2c2d30;border-radius:8px}
.swatch i{width:46px;height:27px;background:#333;border:2px solid #101010}
.pip{fill:none;stroke:#999;stroke-width:1.800}
.pbtn{width:100%;height:39px;padding:0;background:#1f1f20;border:2px solid #2c2d30;border-radius:8px;font-family:"Liberation Sans",Arial,sans-serif;font-size:24px;color:#f0f0f0}
.change{width:220px;height:42px;margin-left:auto}
.select{width:412px;height:43px;margin-top:7px;display:flex;align-items:center;justify-content:space-between;padding:0 7px 0 12px;background:#1f1f20;border:2px solid #2c2d30;border-radius:8px;font-family:"Liberation Sans",Arial,sans-serif;font-size:24px;color:#f0f0f0}
.sel-chev{fill:none;stroke:#ccc;stroke-width:2.200}
.radios{display:flex;align-items:flex-start;height:40px;margin:14px 0 0 18px;font-size:23.600px;color:#8a8a8a}
.radios label{margin:2px 0 0 13px;line-height:30px}
.radios label.w2{width:103px}
.radio{width:26px;height:26px;flex:none;border-radius:50%;background:#121212;border:2px solid #6a6a6a}
.radio.on{background:#5b94ff;border-color:#5b94ff;box-shadow:inset 0 0 0 2px #121212}
```
